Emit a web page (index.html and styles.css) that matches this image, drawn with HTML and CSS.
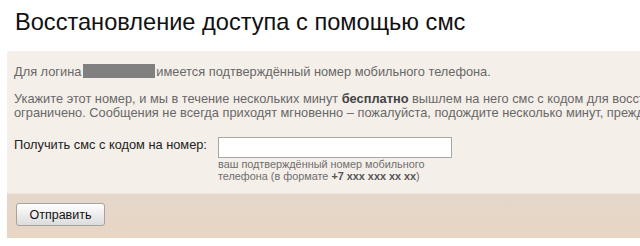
FILE: index.html
```html
<!DOCTYPE html>
<html lang="ru">
<head>
<meta charset="utf-8">
<title>Восстановление доступа с помощью смс</title>
<link rel="stylesheet" href="styles.css">
</head>
<body>
<h1 class="title">Восстановление доступа с помощью смс</h1>
<form class="panel">
  <div class="panel-body">
    <p class="info">Для логина<span class="redacted"></span>имеется подтверждённый номер мобильного телефона.</p>
    <p class="info lines">Укажите этот номер, и мы в течение нескольких минут <b>бесплатно</b> вышлем на него смс с кодом для восстановления доступа. Количество смс в сутки<br>ограничено. Сообщения не всегда приходят мгновенно – пожалуйста, подождите несколько минут, прежде чем запросить код повторно.</p>
    <div class="field">
      <label class="field-label" for="phone">Получить смс с кодом на номер:</label>
      <div class="field-control">
        <input class="phone" id="phone" type="text">
        <div class="hint">ваш подтверждённый номер мобильного<br>телефона (в формате <b>+7 xxx xxx xx xx</b>)</div>
      </div>
    </div>
  </div>
  <div class="panel-footer">
    <button class="send" type="button">Отправить</button>
  </div>
</form>
</body>
</html>
```

FILE: styles.css
```css
html, body {
  margin: 0;
  padding: 0;
  background: #fff;
  overflow: hidden;
}
body {
  font-family: Arial, "Liberation Sans", sans-serif;
  width: 640px;
}
.title {
  margin: 8px 0 15px 15px;
  font-size: 23.6px;
  line-height: 28px;
  font-weight: normal;
  color: #111;
  white-space: nowrap;
}
.panel {
  margin: 0 0 0 7px;
  width: 1100px;
  background: #f5efe9;
}
.panel-body {
  padding: 13px 7px 11px;
}
.info {
  margin: 0 0 13px;
  font-size: 12.8px;
  line-height: 14px;
  color: #686868;
  white-space: nowrap;
}
.info b {
  color: #444;
}
.redacted {
  display: inline-block;
  width: 72px;
  height: 14px;
  background: #808080;
  vertical-align: -2px;
  margin: 0 1px 0 2px;
}
.field {
  display: flex;
  align-items: flex-start;
  margin-top: 17px;
}
.field-label {
  font-size: 12.8px;
  line-height: 16px;
  color: #222;
  width: 204px;
  white-space: nowrap;
}
.field-control {
  display: flex;
  flex-direction: column;
}
.phone {
  box-sizing: border-box;
  width: 234px;
  height: 21px;
  margin: 0;
  border: 1px solid #a9a7a4;
  background: #fff;
  padding: 0 3px;
  font: 13px Arial, "Liberation Sans", sans-serif;
}
.hint {
  font-size: 10.85px;
  line-height: 12px;
  color: #6e6e6e;
  white-space: nowrap;
}
.hint b {
  color: #555;
}
.panel-footer {
  height: 45px;
  background: linear-gradient(#e4d7ca, #e8d6c4);
  border-top: 1px solid #efe6de;
  padding: 9px 0 0 9px;
  box-sizing: border-box;
}
.send {
  width: 89px;
  height: 23px;
  margin: 0;
  padding: 0;
  border: 1px solid #a6a29d;
  border-radius: 3px;
  background: linear-gradient(#ffffff, #ededed 50%, #dcdcdc);
  font: 12.5px Arial, "Liberation Sans", sans-serif;
  color: #111;
}
```
